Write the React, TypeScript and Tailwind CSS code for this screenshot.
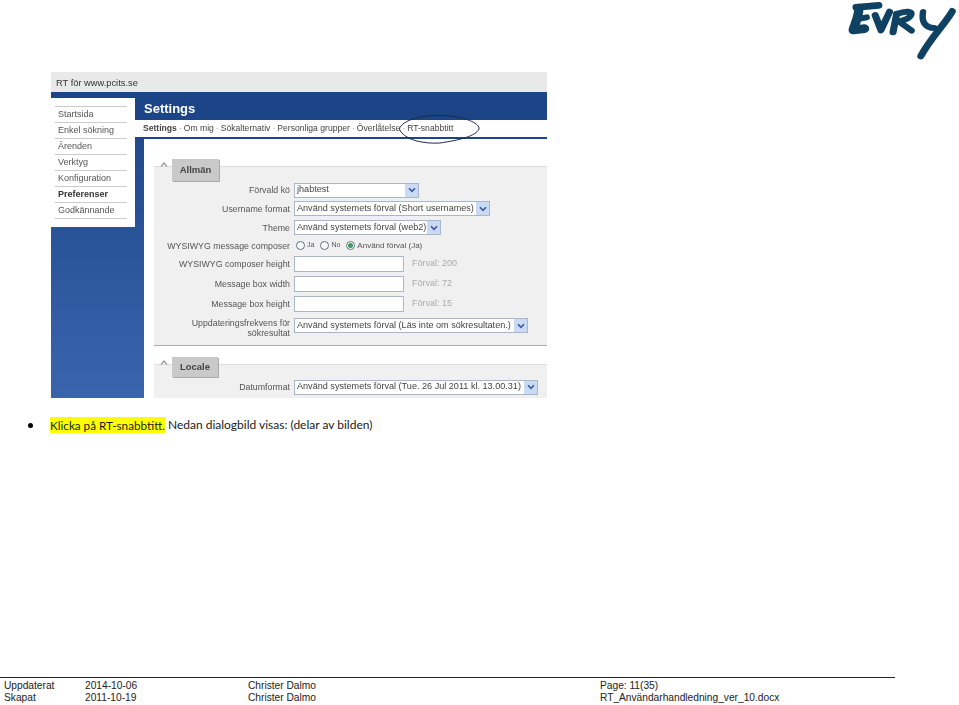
import React from "react";

const sideItems = ["Startsida", "Enkel sökning", "Ärenden", "Verktyg", "Konfiguration", "Preferenser", "Godkännande"];
const navItems = ["Settings", "Om mig", "Sökalternativ", "Personliga grupper", "Överlåtelse", "RT-snabbtitt"];

const Logo = () => (
  <svg width="129" height="70" viewBox="11 0 362 210" preserveAspectRatio="none" fill="none" stroke="#0f4262" strokeLinecap="round" strokeLinejoin="round">
    <path d="M84 22 L148 16" strokeWidth="20" />
    <path d="M92 24 C 92 50 82 68 76 90 L108 86" strokeWidth="26" />
    <path d="M84 58 L114 52" strokeWidth="18" />
    <path d="M138 46 L154 90 L178 36" strokeWidth="20" />
    <path d="M198 42 L188 96" strokeWidth="20" />
    <path d="M198 42 C 222 32 246 32 238 46 C 232 58 214 62 204 64 L240 92" strokeWidth="18" />
    <path d="M272 36 C 268 60 274 84 304 84" strokeWidth="18" />
    <path d="M354 34 C 335 70 295 112 266 168" strokeWidth="20" />
  </svg>
);

const Caret = () => (
  <span className="flex h-full w-[13px] shrink-0 items-center justify-center bg-[#cbdaf4]">
    <svg width="8" height="6" viewBox="0 0 8 6" fill="none" stroke="#3a5a9c" strokeWidth="1.6">
      <path d="M1 1.2 L4 4.4 L7 1.2" />
    </svg>
  </span>
);

const Select = ({ width, text }: { width: string; text: string }) => (
  <div className={`flex h-[15px] items-center justify-between border border-[#a9b7c9] bg-white pl-[2px] text-[9.1px] text-[#444] ${width}`}>
    <span className="whitespace-nowrap">{text}</span>
    <Caret />
  </div>
);

const Row = ({ label, height, children }: { label: React.ReactNode; height: string; children: React.ReactNode }) => (
  <div className={`flex items-center gap-[4px] ${height}`}>
    <div className="w-[136px] shrink-0 text-right text-[8.8px] leading-[10px] text-[#555]">{label}</div>
    {children}
  </div>
);

const NumberRow = ({ label, hint }: { label: string; hint: string }) => (
  <Row label={label} height="h-[20px]">
    <div className="h-[16px] w-[110px] border border-[#a9b7c9] bg-white" />
    <span className="ml-[4px] text-[9px] text-[#aaa]">{hint}</span>
  </Row>
);

const Radio = ({ checked, label, small }: { checked?: boolean; label: string; small?: boolean }) => (
  <span className="flex items-center gap-[2px]">
    <span className="flex h-[9px] w-[9px] items-center justify-center rounded-full border border-[#5d7289] bg-white">
      {checked && <span className="h-[5px] w-[5px] rounded-full bg-[#3f9a57]" />}
    </span>
    <span className={small ? "text-[7px] text-[#555]" : "text-[8px] text-[#555]"}>{label}</span>
  </span>
);

const TabHead = ({ title, width, height }: { title: string; width: string; height: string }) => (
  <div className="-mt-2 flex">
    <svg className="mt-[3px] ml-[6px] mr-[4px] shrink-0" width="8" height="5" viewBox="0 0 8 5" fill="none" stroke="#999" strokeWidth="1.2">
      <path d="M1 4.5 L4 1 L7 4.5" />
    </svg>
    <div className={`flex items-center justify-center bg-[#c9c9c9] text-[9.5px] font-bold text-[#444] shadow-[1px_1px_0_#aaa] ${width} ${height}`}>{title}</div>
  </div>
);

export default function App() {
  return (
    <div className="relative flex h-[705px] w-[959px] flex-col overflow-hidden bg-white font-['Liberation_Sans',Arial,sans-serif]">
      <div className="flex h-[72px] shrink-0 justify-end">
        <Logo />
      </div>

      {/* screenshot of the settings page */}
      <div className="relative ml-[51px] flex h-[326px] w-[496px] shrink-0 flex-col blur-[0.3px]">
        <div className="flex h-[20px] shrink-0 items-center bg-[#e9e9e9] pl-[5px] pt-[4px] text-[9.3px] text-[#333]">RT för www.pcits.se</div>
        <div className="flex flex-1 bg-gradient-to-b from-[#1b4586] to-[#3a64ad]">
          <div className="w-[84px] shrink-0">
            <div className="mt-[6px] h-[129px] bg-white pt-[8px] pl-[4px] pr-[8px]">
              <div className="border-t border-[#ccc]">
                {sideItems.map((item) => (
                  <div
                    key={item}
                    className={`flex h-[16px] items-center border-b border-[#ccc] pl-[3px] text-[9px] ${item === "Preferenser" ? "font-bold text-[#333]" : "text-[#555]"}`}
                  >
                    {item}
                  </div>
                ))}
              </div>
            </div>
          </div>
          <div className="flex min-w-0 flex-1 flex-col">
            <div className="flex h-[28px] shrink-0 items-center bg-[#1b4586] pl-[9px] pt-[6px] text-[13px] font-bold text-white">Settings</div>
            <div className="flex h-[19px] shrink-0 items-center whitespace-nowrap border-b-2 border-[#1b4586] bg-white pl-[8px] text-[8.6px] text-[#444]">
              {navItems.map((item, i) => (
                <span key={item} className={i === 0 ? "font-bold" : ""}>
                  {i > 0 && <span className="mx-[2px] font-normal text-[#999]">·</span>}
                  {item}
                </span>
              ))}
            </div>
            <div className="ml-[9px] flex flex-1 flex-col bg-white pt-[27px] pl-[10px]">
              <div className="flex h-[179px] shrink-0 flex-col border-t border-[#ddd] bg-[#f0f0f0] shadow-[0_1px_0_#aaa]">
                <TabHead title="Allmän" width="w-[47px]" height="h-[22px]" />
                <Row label="Förvald kö" height="h-[18px]">
                  <Select width="w-[125px]" text="jhabtest" />
                </Row>
                <Row label="Username format" height="h-[19px]">
                  <Select width="w-[196px]" text="Använd systemets förval (Short usernames)" />
                </Row>
                <Row label="Theme" height="h-[19px]">
                  <Select width="w-[147px]" text="Använd systemets förval (web2)" />
                </Row>
                <Row label="WYSIWYG message composer" height="h-[17px]">
                  <div className="ml-[2px] flex items-center gap-[6px]">
                    <Radio label="Ja" small />
                    <Radio label="No" small />
                    <Radio label="Använd förval (Ja)" checked />
                  </div>
                </Row>
                <NumberRow label="WYSIWYG composer height" hint="Förval: 200" />
                <NumberRow label="Message box width" hint="Förval: 72" />
                <NumberRow label="Message box height" hint="Förval: 15" />
                <div className="flex gap-[4px] pt-[4px]">
                  <div className="w-[136px] shrink-0 text-right text-[8.8px] leading-[10px] text-[#555]">
                    Uppdateringsfrekvens för
                    <br />
                    sökresultat
                  </div>
                  <Select width="w-[234px]" text="Använd systemets förval (Läs inte om sökresultaten.)" />
                </div>
              </div>
              <div className="mt-[19px] flex-1 border-t border-[#ddd] bg-[#f0f0f0]">
                <TabHead title="Locale" width="w-[46px]" height="h-[20px]" />
                <Row label="Datumformat" height="h-[20px]">
                  <Select width="w-[244px]" text="Använd systemets förval (Tue. 26 Jul 2011 kl. 13.00.31)" />
                </Row>
              </div>
            </div>
          </div>
        </div>

        {/* hand-drawn circle round the RT-snabbtitt link */}
        <svg className="absolute left-[347px] top-[42px]" width="82" height="30" viewBox="0 0 82 30" fill="none" stroke="#1d2b44" strokeWidth="1">
          <path d="M3 12 C 10 3 35 0 52 2 C 70 4 82 10 81 15 C 78 22 62 26 42 29 C 25 30 10 26 4 19 C 1 16 1 14 3 12 Z" />
        </svg>
      </div>

      <div className="mt-[17px] flex h-[20px] shrink-0 items-center font-['Lato',sans-serif] text-[12px] text-[#1a1a1a]">
        <span className="ml-[28px] h-[5px] w-[5px] rounded-full bg-black" />
        <span className="ml-[17px] bg-[#ffff00] text-[11.7px] leading-[16px]">Klicka på RT-snabbtitt.</span>
        <span className="ml-[3px]">Nedan dialogbild visas: (delar av bilden)</span>
      </div>

      <div className="mt-auto mb-[1px] w-[895px] border-t border-[#222] pt-[2px] text-[10.2px] leading-[12px] text-[#222]">
        <div className="flex pl-[4px]">
          <span className="w-[81px]">Uppdaterat</span>
          <span className="w-[163px]">2014-10-06</span>
          <span className="w-[352px]">Christer Dalmo</span>
          <span>Page: 11(35)</span>
        </div>
        <div className="flex pl-[4px]">
          <span className="w-[81px]">Skapat</span>
          <span className="w-[163px]">2011-10-19</span>
          <span className="w-[352px]">Christer Dalmo</span>
          <span className="whitespace-nowrap">RT_Användarhandledning_ver_10.docx</span>
        </div>
      </div>
    </div>
  );
}
